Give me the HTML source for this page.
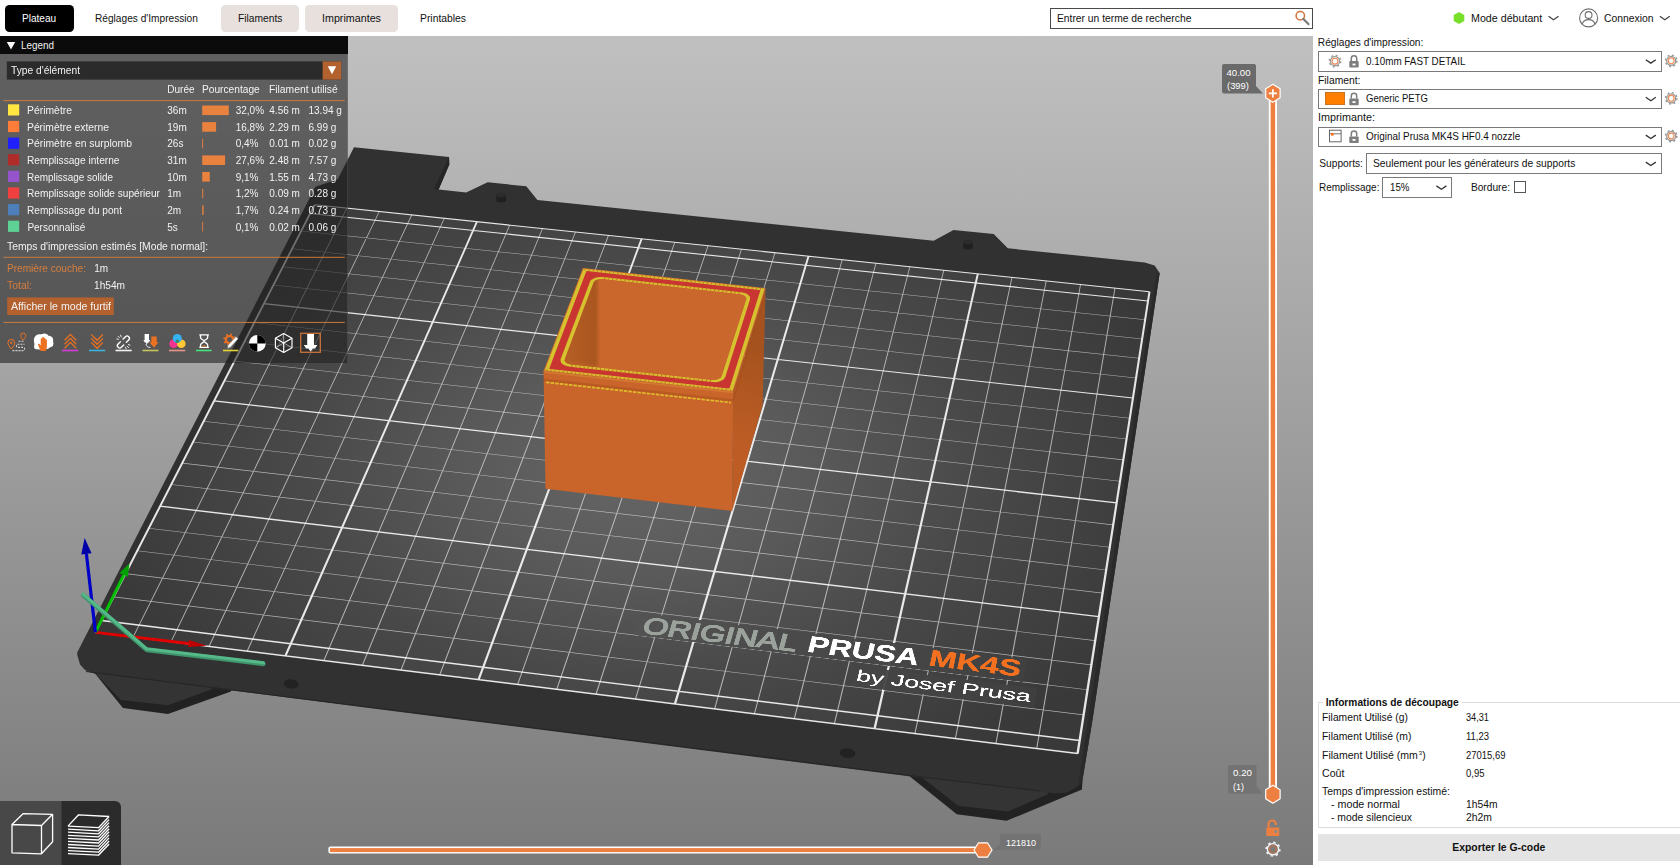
<!DOCTYPE html>
<html lang="fr"><head><meta charset="utf-8"><title>PrusaSlicer</title>
<style>
html,body{margin:0;padding:0;}
body{width:1680px;height:865px;overflow:hidden;background:#fff;font-family:"Liberation Sans", sans-serif;position:relative;}
.t{position:absolute;white-space:nowrap;transform-origin:0 0;}
.abs{position:absolute;}
#scene{position:absolute;left:0;top:0;}
.combo{position:absolute;box-sizing:border-box;border:1px solid #7a7a7a;background:#fff;}
.lg{position:absolute;}
</style></head><body>

<svg id="scene" width="1680" height="865" viewBox="0 0 1680 865">
<defs>
<linearGradient id="bg" x1="0" y1="0" x2="0" y2="1"><stop offset="0" stop-color="#c0c0c0"/><stop offset="1" stop-color="#7a7a7a"/></linearGradient>
<radialGradient id="bedg" gradientUnits="userSpaceOnUse" cx="640" cy="470" r="560" gradientTransform="translate(640 470) scale(1 0.62) translate(-640 -470)"><stop offset="0" stop-color="#666666"/><stop offset="0.3" stop-color="#5a5a5a"/><stop offset="0.6" stop-color="#494949"/><stop offset="1" stop-color="#393939"/></radialGradient>
<linearGradient id="boxr" gradientUnits="userSpaceOnUse" x1="733" y1="440" x2="765" y2="350"><stop offset="0" stop-color="#bd5d25"/><stop offset="1" stop-color="#a6521e"/></linearGradient>
<linearGradient id="cavl" gradientUnits="userSpaceOnUse" x1="562" y1="0" x2="600.5" y2="0"><stop offset="0" stop-color="#b75e25"/><stop offset="0.86" stop-color="#aa561f"/><stop offset="1" stop-color="#c9672d"/></linearGradient>
<linearGradient id="cavf" gradientUnits="userSpaceOnUse" x1="640" y1="380" x2="641.5" y2="371"><stop offset="0" stop-color="#bb5e25"/><stop offset="1" stop-color="#c9672d" stop-opacity="0"/></linearGradient>
</defs>
<rect x="0" y="36" width="1313" height="829" fill="url(#bg)"/>
<polygon points="86.0,670.0 95.4,673.9 122.9,707.9 168.0,713.9 230.9,691.6 236.0,680.0" fill="#222222"/>
<polygon points="95.4,673.5 120.9,700.1 168.0,705.3 212.6,688.9 200.0,680.0" fill="#343434"/>
<polygon points="908.0,775.0 956.8,814.2 1006.6,820.8 1081.9,789.4 1082.5,780.8 1060.0,780.0" fill="#222222"/>
<polygon points="922.7,778.0 958.1,805.7 1007.9,811.5 1048.5,793.9 1040.0,780.0" fill="#343434"/>
<polygon points="354.0,147.3 449.0,157.0 449.3,164.6 438.6,189.6 466.2,192.6 487.6,182.3 526.3,186.3 537.4,199.9 933.7,240.7 953.5,230.0 993.7,234.1 1007.8,248.3 1144.7,262.4 1154.6,265.6 1159.7,273.0 1107.5,620.1 1092.5,720.0 1082.3,781.0 1079.5,784.5 1074.0,789.0 1066.0,792.7 1056.0,793.6 1040.0,791.6 912.7,776.7 420.0,714.5 92.0,672.7 85.0,670.0 80.0,664.5 77.3,655.0 77.2,652.5 315.4,186.8 337.7,179.3" fill="#313131"/>
<polygon points="449.0,157.0 449.3,164.6 438.6,189.6 433.9,189.2" fill="#262626"/>
<polygon points="1159.7,273.0 1107.5,620.1 1092.5,720.0 1082.3,781.0 1078.5,783.0 1079.7,775.3 1103.6,619.6 1156.5,273.7" fill="#2a2a2a"/>
<polyline points="86.0,671.5 420.0,713.5 912.7,775.8 1040.0,791.0" fill="none" stroke="#262626" stroke-width="1"/>
<polygon points="95.4,632.4 1077.6,753.6 1149.5,291.7 314.6,204.8" fill="url(#bedg)"/>
<path d="M132.65 637.00L133.67 637.12L347.33 208.21L346.46 208.12Z M170.53 641.67L171.56 641.80L379.72 211.58L378.84 211.49Z M208.54 646.36L209.57 646.49L412.19 214.96L411.32 214.87Z M246.67 651.07L247.70 651.19L444.76 218.35L443.88 218.26Z M323.30 660.52L324.34 660.65L510.16 225.15L509.27 225.06Z M361.80 665.27L362.84 665.40L543.00 228.57L542.11 228.48Z M400.43 670.04L401.48 670.17L575.92 232.00L575.03 231.91Z M439.19 674.82L440.24 674.95L608.94 235.44L608.05 235.34Z M517.08 684.43L518.14 684.56L675.25 242.34L674.35 242.24Z M556.22 689.26L557.28 689.39L708.55 245.80L707.65 245.71Z M595.49 694.11L596.56 694.24L741.93 249.28L741.03 249.18Z M634.89 698.97L635.96 699.10L775.41 252.76L774.51 252.67Z M714.08 708.74L715.16 708.88L842.66 259.76L841.74 259.67Z M753.88 713.65L754.95 713.79L876.42 263.28L875.50 263.18Z M793.80 718.58L794.88 718.71L910.28 266.80L909.36 266.71Z M833.86 723.52L834.94 723.66L944.23 270.33L943.31 270.24Z M914.38 733.46L915.47 733.59L1012.42 277.43L1011.50 277.34Z M954.84 738.45L955.94 738.59L1046.66 281.00L1045.74 280.90Z M995.44 743.46L996.54 743.60L1081.00 284.57L1080.07 284.47Z M1036.18 748.49L1037.28 748.62L1115.43 288.15L1114.50 288.06Z M113.48 597.14L1083.56 715.28L1083.67 714.60L113.80 596.50Z M125.38 573.91L1087.49 690.07L1087.59 689.39L125.70 573.29Z M137.09 551.07L1091.35 665.29L1091.45 664.62L137.41 550.45Z M148.61 528.60L1095.14 640.93L1095.24 640.28L148.92 528.00Z M171.08 484.76L1102.53 593.45L1102.63 592.82L171.38 484.18Z M182.05 463.38L1106.13 570.31L1106.23 569.69L182.34 462.80Z M192.84 442.33L1109.67 547.55L1109.77 546.94L193.12 441.77Z M203.45 421.62L1113.16 525.17L1113.25 524.57L203.74 421.06Z M224.19 381.16L1119.96 481.49L1120.05 480.91L224.47 380.62Z M234.32 361.40L1123.27 460.18L1123.36 459.60L234.59 360.87Z M244.30 341.94L1126.54 439.20L1126.63 438.64L244.56 341.42Z M254.12 322.78L1129.75 418.56L1129.84 418.01L254.38 322.27Z M273.32 285.33L1136.03 378.24L1136.11 377.70L273.57 284.83Z M282.70 267.02L1139.09 358.54L1139.18 358.02L282.96 266.53Z M291.95 248.98L1142.11 339.15L1142.19 338.63L292.20 248.50Z M301.06 231.21L1145.09 320.06L1145.17 319.54L301.31 230.73Z" fill="#ffffff" fill-opacity="0.6"/>
<path d="M94.31 632.27L96.49 632.53L315.54 204.90L313.66 204.70Z M284.33 655.71L286.55 655.99L477.92 221.80L476.03 221.60Z M477.47 679.55L479.73 679.82L642.56 238.94L640.64 238.74Z M673.81 703.77L676.11 704.06L809.51 256.31L807.56 256.11Z M873.43 728.41L875.76 728.69L978.80 273.93L976.83 273.73Z M1076.41 753.45L1078.79 753.75L1150.50 291.80L1148.50 291.60Z M95.04 633.10L1077.48 754.36L1077.72 752.84L95.76 631.70Z M101.18 621.13L1079.51 741.35L1079.74 739.85L101.89 619.75Z M159.76 506.84L1098.81 617.36L1099.02 615.98L160.42 505.57Z M213.74 401.54L1116.53 503.49L1116.73 502.22L214.35 400.37Z M263.64 304.21L1132.87 398.55L1133.05 397.38L264.20 303.12Z M309.90 213.96L1147.97 301.54L1148.14 300.46L310.42 212.96Z M314.34 205.30L1149.42 292.24L1149.58 291.16L314.86 204.30Z" fill="#ffffff" fill-opacity="0.88"/>
<ellipse cx="291.2" cy="683.9" rx="7.6" ry="4.6" fill="#222" transform="rotate(7 291.2 683.9)"/>
<ellipse cx="847.5" cy="753.2" rx="7.8" ry="4.7" fill="#222" transform="rotate(7 847.5 753.2)"/>
<path d="M496.3 195.0v5.2a4.9 2.2 0 0 0 9.8 0v-5.2z" fill="#202020"/>
<ellipse cx="501.2" cy="195.0" rx="4.9" ry="2.2" fill="#2b2b2b"/>
<path d="M963.1 242.0v5.2a4.9 2.2 0 0 0 9.8 0v-5.2z" fill="#202020"/>
<ellipse cx="968.0" cy="242.0" rx="4.9" ry="2.2" fill="#2b2b2b"/>
<!--BEDTEXT-->
<line x1="95.4" y1="632.4" x2="188.4" y2="643.5" stroke="#e00000" stroke-width="2.9"/><polygon points="206.8,645.7 188.0,646.9 188.8,640.1" fill="#c00000"/>
<line x1="95.4" y1="632.4" x2="123.7" y2="575.1" stroke="#00c000" stroke-width="3.0"/><polygon points="129.4,563.4 127.8,577.1 119.5,573.0" fill="#00a000"/>
<line x1="95.4" y1="632.4" x2="86.4" y2="553.9" stroke="#0000c8" stroke-width="3.2"/><polygon points="84.6,538.0 91.6,553.3 81.3,554.5" fill="#0000a8"/>
<polyline points="83.4,595.2 146.9,650.0 263.3,663.9" fill="none" stroke="#3f946c" stroke-width="4.6" stroke-linejoin="round" stroke-linecap="round"/>
<polyline points="83.1,594.2 146.7,648.8 263.5,662.7" fill="none" stroke="#56b98a" stroke-width="3.0" stroke-linejoin="round" stroke-linecap="round"/>
<polygon points="545.5,488.7 732.2,510.9 733.2,391.5 543.6,370.9" fill="#c9652b"/>
<polygon points="732.2,510.9 762.6,405.1 765.6,288.3 733.2,391.5" fill="url(#boxr)"/>
<polygon points="543.6,370.9 733.2,391.5 765.6,288.3 582.9,268.1" fill="#d5702c"/>
<polygon points="731.7,390.8 731.9,390.8 732.1,390.8 732.2,390.7 732.4,390.6 732.5,390.5 732.6,390.4 764.4,289.1 764.4,289.0 764.4,288.9 764.3,288.8 764.2,288.7 764.0,288.7 763.8,288.6 584.4,268.8 584.2,268.8 584.0,268.8 583.8,268.8 583.6,268.9 583.5,269.0 583.5,269.1 544.9,370.0 544.9,370.2 544.9,370.3 545.0,370.4 545.2,370.5 545.3,370.5 545.5,370.6" fill="#d6c22e"/>
<polygon points="728.7,388.4 728.9,388.4 729.1,388.3 729.3,388.3 729.4,388.2 729.5,388.1 729.6,388.0 760.3,290.6 760.4,290.5 760.3,290.4 760.2,290.3 760.1,290.2 759.9,290.2 759.7,290.1 587.1,271.0 586.9,271.0 586.7,271.1 586.6,271.1 586.4,271.2 586.3,271.3 586.2,271.4 549.3,368.4 549.3,368.5 549.3,368.6 549.4,368.7 549.5,368.8 549.7,368.9 549.9,368.9" fill="#c93531"/>
<polygon points="712.0,382.1 715.0,382.2 717.9,381.9 720.6,381.1 722.8,380.0 724.4,378.6 725.3,377.0 750.0,299.4 750.1,297.8 749.5,296.2 748.1,294.8 746.2,293.6 743.7,292.7 741.0,292.2 603.2,277.0 600.3,276.9 597.4,277.2 594.8,277.9 592.6,278.9 590.9,280.2 590.0,281.7 560.7,359.1 560.5,360.7 561.1,362.4 562.4,363.9 564.4,365.2 566.9,366.1 569.7,366.7" fill="#d6c22e"/>
<clipPath id="cavc"><polygon points="711.7,379.9 714.0,380.0 716.2,379.7 718.2,379.1 719.8,378.3 721.0,377.2 721.7,376.0 746.2,299.5 746.3,298.3 745.8,297.1 744.8,296.0 743.3,295.1 741.5,294.5 739.4,294.1 603.4,279.1 601.2,279.0 599.1,279.2 597.1,279.7 595.4,280.5 594.2,281.5 593.5,282.7 564.7,358.9 564.6,360.2 565.0,361.4 566.0,362.6 567.4,363.5 569.3,364.2 571.5,364.6"/></clipPath>
<g clip-path="url(#cavc)">
<polygon points="711.7,379.9 714.0,380.0 716.2,379.7 718.2,379.1 719.8,378.3 721.0,377.2 721.7,376.0 746.2,299.5 746.3,298.3 745.8,297.1 744.8,296.0 743.3,295.1 741.5,294.5 739.4,294.1 603.4,279.1 601.2,279.0 599.1,279.2 597.1,279.7 595.4,280.5 594.2,281.5 593.5,282.7 564.7,358.9 564.6,360.2 565.0,361.4 566.0,362.6 567.4,363.5 569.3,364.2 571.5,364.6" fill="#c8662c"/>
<polygon points="598.8,278.6 747.6,295.0 745.0,411.9 600.3,395.8" fill="#c9672d"/>
<polygon points="594.4,277.8 598.8,276.2 600.3,395.8 564.4,481.4 562.9,363.7" fill="url(#cavl)"/>
<polygon points="562.9,363.7 720.2,380.8 722.6,373.4 566.5,354.2" fill="url(#cavf)"/>
</g>
<polygon points="543.7,378.6 733.1,399.3 733.1,401.6 543.8,380.9" fill="#b85a22"/>
<polygon points="543.6,370.9 733.2,391.5 733.2,393.3 543.6,372.7" fill="#d4792f"/>
<line x1="546.1" y1="382.3" x2="730.8" y2="402.6" stroke="#e0bd2c" stroke-width="1.7" stroke-dasharray="3.4 1.2"/>
<polygon points="733.1,399.3 765.4,295.9 765.3,298.2 733.1,401.6" fill="#a54d1c"/>
<line x1="546.4" y1="370.2" x2="731.3" y2="390.3" stroke="#c9762a" stroke-width="2" stroke-dasharray="1.2 2.9" />
<line x1="584.6" y1="269.2" x2="763.0" y2="289.0" stroke="#c9762a" stroke-width="2" stroke-dasharray="1.2 2.9" />
<line x1="571.3" y1="365.9" x2="711.2" y2="381.1" stroke="#c9762a" stroke-width="2" stroke-dasharray="1.2 2.9" />
<line x1="604.0" y1="277.9" x2="739.5" y2="292.9" stroke="#c9762a" stroke-width="2" stroke-dasharray="1.2 2.9" />
<line x1="1272.9" y1="93" x2="1272.9" y2="794" stroke="#fff" stroke-width="8.2"/>
<line x1="1272.9" y1="93" x2="1272.9" y2="794" stroke="#ed7f41" stroke-width="4.5"/>
<polygon points="1272.9,84.3 1280.1,88.8 1280.1,97.8 1272.9,102.3 1265.7,97.8 1265.7,88.8" fill="#ed7f41" stroke="#fff" stroke-width="1.2" stroke-linejoin="round"/>
<path d="M1268.8 93.3h8.2M1272.9 89.2v8.2" stroke="#fff" stroke-width="1.7"/>
<polygon points="1272.9,785.3 1280.1,789.8 1280.1,798.8 1272.9,803.3 1265.7,798.8 1265.7,789.8" fill="#ed7f41" stroke="#fff" stroke-width="1.2" stroke-linejoin="round"/>
<path d="M1224 64h30a2 2 0 0 1 2 2v20l7 7.5h-39a2 2 0 0 1-2-2v-25.500a2 2 0 0 1 2-2z" fill="#6a6a6a"/>
<path d="M1230 765h24.500a2 2 0 0 1 2 2v19l6 7.700h-32.500a2 2 0 0 1-2-2v-24.700a2 2 0 0 1 2-2z" fill="#737373"/>
<rect x="328.4" y="846.6" width="655" height="7" rx="2" fill="#fff"/>
<rect x="330" y="848.1" width="653" height="4" fill="#ed7f41"/>
<polygon points="992.0,850.0 987.5,857.2 978.5,857.2 974.0,850.0 978.5,842.8 987.5,842.8" fill="#ed7f41" stroke="#fff" stroke-width="1.2" stroke-linejoin="round"/>
<path d="M1002 833.700h37a2 2 0 0 1 2 2v12.300a2 2 0 0 1-2 2h-46l7-6v-8.300a2 2 0 0 1 2-2z" fill="#737373"/>
<g fill="none" stroke="#ed7f41"><path d="M1268.6 827.5v-3.4a3.6 3.6 0 0 1 7.2 0v1" stroke-width="2.2"/></g><rect x="1266.3" y="827.5" width="13" height="8.4" rx="1" fill="#ed7f41"/><rect x="1274.3" y="830.2" width="3.2" height="2.6" fill="#8a8a8a"/>
<g transform="translate(1273 849.2)"><circle r="5.6" fill="none" stroke="#f4f4f4" stroke-width="1.4"/><circle r="6.9" fill="none" stroke="#f4f4f4" stroke-width="1.5" stroke-dasharray="2.4 3.02"/><circle r="3.5" fill="none" stroke="#c9703f" stroke-width="1.1"/></g>
<path d="M0 801h115a6 6 0 0 1 6 6v58h-121z" fill="#2b2b2b"/><rect x="0" y="801" width="61.5" height="64" fill="#484848"/>
<g fill="none" stroke="#fff" stroke-width="1.3" stroke-linejoin="round"><path d="M12 824.5l29.5 1v28.3l-29.5-1zM12 824.5l11-10.8 29.6 0.6-11.1 11.2M52.6 814.3v27.5l-11.1 12"/></g>
<g fill="none" stroke="#fff" stroke-width="1.35" stroke-linejoin="round"><path d="M68 853.6l30.5 1.6 10.6-11.2" /><path d="M68 850.6l30.5 1.6 10.6-11.2" /><path d="M68 847.5l30.5 1.6 10.6-11.2" /><path d="M68 844.5l30.5 1.6 10.6-11.2" /><path d="M68 841.4l30.5 1.6 10.6-11.2" /><path d="M68 838.4l30.5 1.6 10.6-11.2" /><path d="M68 835.3l30.5 1.6 10.6-11.2" /><path d="M68 832.2l30.5 1.6 10.6-11.2" /><path d="M68 829.2l30.5 1.6 10.6-11.2" /><path d="M68 826.1l30.5 1.6 10.6-11.2" /><path d="M68 826.1l10.6-11.3 30.5 1.7"/></g>
</svg>
<span class="t" style="left:1226.5px;top:66.77px;font-size:9.6px;line-height:11.6px;color:#fff;">40.00</span>
<span class="t" style="left:1226.5px;top:79.97px;font-size:9.6px;line-height:11.6px;color:#fff;transform:scaleX(0.9817);">(399)</span>
<span class="t" style="left:1232.5px;top:766.97px;font-size:9.6px;line-height:11.6px;color:#fff;transform:scaleX(1.0169);">0.20</span>
<span class="t" style="left:1232.5px;top:780.67px;font-size:9.6px;line-height:11.6px;color:#fff;transform:scaleX(0.9377);">(1)</span>
<span class="t" style="left:1005.6px;top:836.77px;font-size:9.6px;line-height:11.6px;color:#fff;transform:scaleX(0.9365);">121810</span>
<div class="abs" style="left:0;top:0;width:2500px;height:2100px;transform-origin:0 0;transform:matrix3d(0.3182121343,0.03076378625,0,-1.369975057e-05,-0.1113077487,0.1577018175,0,-7.260790408e-05,0,0,1,0,314.6000061,204.8000031,0,1);pointer-events:none;"><div class="abs" style="left:1348px;top:1758px;width:990px;height:92px;background:linear-gradient(to right,#525252,#484848 50%,#404040);opacity:0.95"></div><div class="abs" style="left:1916px;top:1868px;width:460px;height:78px;background:linear-gradient(to right,#454545,#3f3f3f);opacity:0.95"></div><span class="t" style="left:1363.0px;top:1751.0px;font-size:91.9px;line-height:110.3px;color:#9ba29c;-webkit-text-stroke:5.2px #9ba29c;transform:scaleX(0.9016);">ORIGINAL</span><span class="t" style="left:1787.0px;top:1747.0px;font-size:91.9px;line-height:110.3px;color:#ffffff;font-weight:bold;-webkit-text-stroke:1.6px #ffffff;transform:scaleX(0.8797);">PRUSA</span><span class="t" style="left:2096.0px;top:1743.0px;font-size:91.9px;line-height:110.3px;color:#f2701f;font-weight:bold;-webkit-text-stroke:1.6px #f2701f;transform:scaleX(0.9086);">MK4S</span><span class="t" style="left:1926.0px;top:1866.3px;font-size:63.1px;line-height:75.7px;color:#ffffff;-webkit-text-stroke:0.8px #ffffff;transform:scaleX(1.0495);">by Josef Prusa</span></div>
<div class="abs" style="left:0;top:54px;width:347.5px;height:309px;background:rgba(33,33,33,0.6);box-shadow:inset -1px 0 0 rgba(255,255,255,0.10);"></div>
<div class="abs" style="left:0;top:36px;width:347.5px;height:18px;background:#0b0b0b;"></div>
<svg class="abs" style="left:0;top:36px" width="348" height="330" viewBox="0 36 348 330">
<path d="M6.8 41.9h8.4l-4.2 7.6z" fill="#fff"/>
<rect x="6.8" y="61.4" width="334.4" height="18.2" fill="#2b2b2b"/><rect x="322.6" y="61.4" width="18.6" height="18.2" fill="#b3612e"/><path d="M327.8 66.3h8.4l-4.2 8z" fill="#fff"/>
<rect x="3.4" y="100.1" width="341.4" height="1" fill="#c97a3e"/>
<rect x="3.4" y="256.8" width="341.4" height="1" fill="#c97a3e"/>
<rect x="3.4" y="321.9" width="341.4" height="1" fill="#c97a3e"/>
<rect x="8" y="104.3" width="11.2" height="11.2" fill="#ffe640"/>
<rect x="202.2" y="105.5" width="26.6" height="9.6" fill="#e9813f"/>
<rect x="8" y="120.9" width="11.2" height="11.2" fill="#ff7d38"/>
<rect x="202.2" y="122.1" width="13.9" height="9.6" fill="#e9813f"/>
<rect x="8" y="137.6" width="11.2" height="11.2" fill="#1f1fff"/>
<rect x="202.2" y="138.8" width="0.9" height="9.6" fill="#e9813f"/>
<rect x="8" y="154.2" width="11.2" height="11.2" fill="#b02c28"/>
<rect x="202.2" y="155.4" width="22.9" height="9.6" fill="#e9813f"/>
<rect x="8" y="170.8" width="11.2" height="11.2" fill="#9654cc"/>
<rect x="202.2" y="172.0" width="7.6" height="9.6" fill="#e9813f"/>
<rect x="8" y="187.4" width="11.2" height="11.2" fill="#f04040"/>
<rect x="202.2" y="188.6" width="1.0" height="9.6" fill="#e9813f"/>
<rect x="8" y="204.1" width="11.2" height="11.2" fill="#4d80ba"/>
<rect x="202.2" y="205.3" width="1.4" height="9.6" fill="#e9813f"/>
<rect x="8" y="220.7" width="11.2" height="11.2" fill="#5ed194"/>
<rect x="202.2" y="221.9" width="0.9" height="9.6" fill="#e9813f"/>
<rect x="7.2" y="297.4" width="106.6" height="17.6" fill="#b3612e"/>
<g fill="none" stroke="#ec7222" stroke-width="1"><path d="M11.3 349c-2.6-3.2-3.4-4.6-3.4-6.3a3.4 3.4 0 0 1 6.8 0c0 1.7-0.8 3.1-3.4 6.3z"/><circle cx="11.3" cy="342.7" r="0.9"/><path d="M23.2 340.2c-1.9-2.4-2.5-3.4-2.5-4.6a2.5 2.5 0 0 1 5 0c0 1.2-0.6 2.2-2.5 4.6z"/></g><g fill="none" stroke="#cfcfcf" stroke-width="1.1" stroke-dasharray="2 1"><path d="M12.5 350.6h10.5a1.6 1.6 0 0 0 0-3.2h-5a1.6 1.6 0 0 1 0-3.2h6.5"/><path d="M18.5 341.2h6"/></g><path d="M35.5 336c2-2.6 5-1.4 6.6-2 2.6-1.2 5.6-0.2 6.2 1.8 2.8 0 5 1.6 4.8 4.2-0.2 2 0.8 3.2 0 5.2-0.8 2.2-3.2 1.6-4.6 3.4-1.6 1.2-11 1.4-13.2 0.4-2-1.4-0.6-3.6-1-5.6-0.4-2.6-1-5.2 1.2-7.400z" fill="#fff"/><path d="M40.6 351l-2.400-5.800c-0.500-1.200 0.900-1.900 1.600-0.900l0.900 1.300v-6.600c0-1.100 1.500-1.100 1.500 0v-1.400c0-1.100 1.600-1.100 1.600 0v1c0-1.100 1.600-1.100 1.600 0v1.300c0-1 1.500-1 1.500 0v6.300c0 2-0.600 3.200-1.200 4.800z" fill="#ec7222"/><g fill="none" stroke="#ec7222" stroke-width="1.3"><path d="M64.600 340.300l5.800-5.900 5.800 5.900M64.600 344.300l5.800-5.900 5.800 5.900M64.600 348.300l5.800-5.900 5.800 5.900"/></g><rect x="62" y="349.700" width="16.200" height="1.600" fill="#d63bd6"/><g fill="none" stroke="#ec7222" stroke-width="1.3"><path d="M91.300 334.400l5.800 5.900 5.800-5.900M91.300 338.400l5.800 5.900 5.800-5.900M91.300 342.400l5.800 5.900 5.800-5.900"/></g><rect x="89" y="349.700" width="16.200" height="1.600" fill="#3bb2d9"/><g transform="rotate(-45 123.4 342)" fill="none" stroke="#fff" stroke-width="1.35" stroke-linecap="round"><path d="M121.600 339.700h-3.400a2.300 2.300 0 0 0 0 4.600h3.400M125.200 339.700h3.400a2.300 2.300 0 0 1 0 4.600h-3.400"/></g><g stroke="#fff" stroke-width="0.9" stroke-linecap="round"><path d="M118.200 336.400l1.200 1.200M120.700 335.200l0.400 1.600M116.800 338.900l1.600 0.400M128.600 347.600l-1.200-1.200M126.100 348.800l-0.400-1.600M130 345.100l-1.600-0.400"/></g><rect x="115.500" y="349.700" width="16.200" height="1.600" fill="#f2f2f2"/><path d="M144.600 334h4.400v6h1.200l-1.400 2.600h-1l-1 1.800-1-1.800h-1l-1.400-2.600h1.200z" fill="#fff"/><path d="M146 344c0.400 2.400 1.600 3.400 4.400 3.400" fill="none" stroke="#fff" stroke-width="0.900"/><path d="M151.300 336.600h5.400v5.600h1.800l-4.500 5.600-4.500-5.600h1.800z" fill="#ec7222"/><rect x="142.500" y="349.700" width="16" height="1.600" fill="#c6c45a"/><circle cx="173.600" cy="343.700" r="4.300" fill="#f2338f"/><circle cx="181.300" cy="343.700" r="4.300" fill="#ffc933"/><circle cx="177.300" cy="338.400" r="4.500" fill="#35b3f2"/><circle cx="177.400" cy="341.300" r="1.800" fill="#2f8f6a"/><rect x="169" y="349.700" width="16.200" height="1.600" fill="#e8948a"/><g fill="none" stroke="#fff" stroke-width="1.300"><path d="M199.300 334.800h9.600M199.300 347.400h9.600M200.500 335v2.400c0 2 3.600 2.600 3.600 3.800s-3.600 1.800-3.600 3.800v2.400M207.700 335v2.400c0 2-3.600 2.600-3.600 3.800s3.600 1.800 3.600 3.800v2.400"/></g><path d="M201.600 346.600c0.600-1.600 4.400-1.600 5 0z" fill="#ec7222"/><rect x="196" y="349.700" width="15.600" height="1.600" fill="#45e078"/><g transform="translate(229.500 339.600)"><circle r="3.600" fill="none" stroke="#ec7222" stroke-width="2.200"/><circle r="5.300" fill="none" stroke="#ec7222" stroke-width="1.800" stroke-dasharray="1.900 2.260"/></g><path d="M228 345.200l8-8.600 2.300 2.200-8 8.600-3 1z" fill="#fff" stroke="#5a5a5a" stroke-width="0.500"/><rect x="223" y="349.700" width="15.400" height="1.600" fill="#e2d233"/><circle cx="257.300" cy="343.400" r="8.400" fill="#fff"/><path d="M257.300 343.400v-8.400a8.400 8.400 0 0 1 8.400 8.400zM257.300 343.400v8.400a8.400 8.400 0 0 1-8.400-8.400z" fill="#000"/><g fill="none" stroke="#fff" stroke-width="1.150" stroke-linejoin="round"><path d="M283.700 333.600l8.300 4.700v9.500l-8.300 4.700-8.300-4.700v-9.500z"/><path d="M275.400 338.300l8.300 4.700 8.300-4.700M283.700 343v9.500" /><path d="M283.700 333.600v9.400M275.400 347.800l8.300-4.800 8.300 4.800" stroke-width="0.700" stroke-opacity="0.800"/></g><rect x="300.700" y="333.300" width="19.600" height="19" fill="none" stroke="#c8733a" stroke-width="1.300"/><path d="M307.200 333.900h6.800v11h3.400l-2.300 3.500h-2.300l-2.200 3-2.200-3h-2.300l-2.300-3.500h3.400z" fill="#fff"/>
</svg>
<span class="t" style="left:21.2px;top:40.23px;font-size:10px;line-height:12px;color:#f2f2f2;transform:scaleX(0.9889);">Legend</span>
<span class="t" style="left:10.7px;top:65.03px;font-size:10px;line-height:12px;color:#f2f2f2;transform:scaleX(1.0221);">Type d'élément</span>
<span class="t" style="left:167.3px;top:84.44px;font-size:10px;line-height:12px;color:#f2f2f2;">Durée</span>
<span class="t" style="left:202.2px;top:84.44px;font-size:10px;line-height:12px;color:#f2f2f2;transform:scaleX(1.0175);">Pourcentage</span>
<span class="t" style="left:269.3px;top:84.44px;font-size:10px;line-height:12px;color:#f2f2f2;transform:scaleX(1.0301);">Filament utilisé</span>
<span class="t" style="left:27.4px;top:105.23px;font-size:10px;line-height:12px;color:#f2f2f2;transform:scaleX(1.0382);">Périmètre</span>
<span class="t" style="left:167.3px;top:105.23px;font-size:10px;line-height:12px;color:#f2f2f2;">36m</span>
<span class="t" style="left:235.7px;top:105.23px;font-size:10px;line-height:12px;color:#f2f2f2;">32,0%</span>
<span class="t" style="left:269.3px;top:105.23px;font-size:10px;line-height:12px;color:#f2f2f2;">4.56 m</span>
<span class="t" style="left:308.5px;top:105.23px;font-size:10px;line-height:12px;color:#f2f2f2;">13.94 g</span>
<span class="t" style="left:27.4px;top:121.86px;font-size:10px;line-height:12px;color:#f2f2f2;transform:scaleX(1.0317);">Périmètre externe</span>
<span class="t" style="left:167.3px;top:121.86px;font-size:10px;line-height:12px;color:#f2f2f2;">19m</span>
<span class="t" style="left:235.7px;top:121.86px;font-size:10px;line-height:12px;color:#f2f2f2;">16,8%</span>
<span class="t" style="left:269.3px;top:121.86px;font-size:10px;line-height:12px;color:#f2f2f2;">2.29 m</span>
<span class="t" style="left:308.5px;top:121.86px;font-size:10px;line-height:12px;color:#f2f2f2;">6.99 g</span>
<span class="t" style="left:27.4px;top:138.49px;font-size:10px;line-height:12px;color:#f2f2f2;transform:scaleX(1.0380);">Périmètre en surplomb</span>
<span class="t" style="left:167.3px;top:138.49px;font-size:10px;line-height:12px;color:#f2f2f2;">26s</span>
<span class="t" style="left:235.7px;top:138.49px;font-size:10px;line-height:12px;color:#f2f2f2;">0,4%</span>
<span class="t" style="left:269.3px;top:138.49px;font-size:10px;line-height:12px;color:#f2f2f2;">0.01 m</span>
<span class="t" style="left:308.5px;top:138.49px;font-size:10px;line-height:12px;color:#f2f2f2;">0.02 g</span>
<span class="t" style="left:27.4px;top:155.12px;font-size:10px;line-height:12px;color:#f2f2f2;transform:scaleX(1.0147);">Remplissage interne</span>
<span class="t" style="left:167.3px;top:155.12px;font-size:10px;line-height:12px;color:#f2f2f2;">31m</span>
<span class="t" style="left:235.7px;top:155.12px;font-size:10px;line-height:12px;color:#f2f2f2;">27,6%</span>
<span class="t" style="left:269.3px;top:155.12px;font-size:10px;line-height:12px;color:#f2f2f2;">2.48 m</span>
<span class="t" style="left:308.5px;top:155.12px;font-size:10px;line-height:12px;color:#f2f2f2;">7.57 g</span>
<span class="t" style="left:27.4px;top:171.75px;font-size:10px;line-height:12px;color:#f2f2f2;transform:scaleX(0.9918);">Remplissage solide</span>
<span class="t" style="left:167.3px;top:171.75px;font-size:10px;line-height:12px;color:#f2f2f2;">10m</span>
<span class="t" style="left:235.7px;top:171.75px;font-size:10px;line-height:12px;color:#f2f2f2;">9,1%</span>
<span class="t" style="left:269.3px;top:171.75px;font-size:10px;line-height:12px;color:#f2f2f2;">1.55 m</span>
<span class="t" style="left:308.5px;top:171.75px;font-size:10px;line-height:12px;color:#f2f2f2;">4.73 g</span>
<span class="t" style="left:27.4px;top:188.38px;font-size:10px;line-height:12px;color:#f2f2f2;transform:scaleX(1.0139);">Remplissage solide supérieur</span>
<span class="t" style="left:167.3px;top:188.38px;font-size:10px;line-height:12px;color:#f2f2f2;">1m</span>
<span class="t" style="left:235.7px;top:188.38px;font-size:10px;line-height:12px;color:#f2f2f2;">1,2%</span>
<span class="t" style="left:269.3px;top:188.38px;font-size:10px;line-height:12px;color:#f2f2f2;">0.09 m</span>
<span class="t" style="left:308.5px;top:188.38px;font-size:10px;line-height:12px;color:#f2f2f2;">0.28 g</span>
<span class="t" style="left:27.4px;top:205.01px;font-size:10px;line-height:12px;color:#f2f2f2;transform:scaleX(1.0112);">Remplissage du pont</span>
<span class="t" style="left:167.3px;top:205.01px;font-size:10px;line-height:12px;color:#f2f2f2;">2m</span>
<span class="t" style="left:235.7px;top:205.01px;font-size:10px;line-height:12px;color:#f2f2f2;">1,7%</span>
<span class="t" style="left:269.3px;top:205.01px;font-size:10px;line-height:12px;color:#f2f2f2;">0.24 m</span>
<span class="t" style="left:308.5px;top:205.01px;font-size:10px;line-height:12px;color:#f2f2f2;">0.73 g</span>
<span class="t" style="left:27.4px;top:221.64px;font-size:10px;line-height:12px;color:#f2f2f2;">Personnalisé</span>
<span class="t" style="left:167.3px;top:221.64px;font-size:10px;line-height:12px;color:#f2f2f2;">5s</span>
<span class="t" style="left:235.7px;top:221.64px;font-size:10px;line-height:12px;color:#f2f2f2;">0,1%</span>
<span class="t" style="left:269.3px;top:221.64px;font-size:10px;line-height:12px;color:#f2f2f2;">0.02 m</span>
<span class="t" style="left:308.5px;top:221.64px;font-size:10px;line-height:12px;color:#f2f2f2;">0.06 g</span>
<span class="t" style="left:7.4px;top:241.43px;font-size:10px;line-height:12px;color:#f2f2f2;transform:scaleX(1.0321);">Temps d'impression estimés [Mode normal]:</span>
<span class="t" style="left:7.4px;top:262.84px;font-size:10px;line-height:12px;color:#d97e3d;transform:scaleX(1.0080);">Première couche:</span>
<span class="t" style="left:94.2px;top:262.84px;font-size:10px;line-height:12px;color:#f2f2f2;">1m</span>
<span class="t" style="left:7.4px;top:279.63px;font-size:10px;line-height:12px;color:#d97e3d;transform:scaleX(1.0460);">Total:</span>
<span class="t" style="left:94.2px;top:279.63px;font-size:10px;line-height:12px;color:#f2f2f2;transform:scaleX(1.0139);">1h54m</span>
<span class="t" style="left:10.7px;top:301.04px;font-size:10px;line-height:12px;color:#f2f2f2;transform:scaleX(1.0604);">Afficher le mode furtif</span>
<div class="abs" style="left:0;top:0;width:1680px;height:36px;background:#fff;"></div>
<div class="abs" style="left:4.5px;top:5px;width:69px;height:26.5px;border-radius:4.5px;background:#000;"></div>
<div class="abs" style="left:221px;top:5px;width:78px;height:26.5px;border-radius:4.5px;background:#e7e0dd;"></div>
<div class="abs" style="left:304.5px;top:5px;width:93px;height:26.5px;border-radius:4.5px;background:#e7e0dd;"></div>
<span class="t" style="left:22.0px;top:12.50px;font-size:10.4px;line-height:12.4px;color:#fff;transform:scaleX(0.9697);">Plateau</span>
<span class="t" style="left:95.3px;top:12.50px;font-size:10.4px;line-height:12.4px;color:#111;transform:scaleX(0.9767);">Réglages d'Impression</span>
<span class="t" style="left:238.0px;top:12.50px;font-size:10.4px;line-height:12.4px;color:#111;transform:scaleX(0.9872);">Filaments</span>
<span class="t" style="left:321.6px;top:12.50px;font-size:10.4px;line-height:12.4px;color:#111;transform:scaleX(1.0313);">Imprimantes</span>
<span class="t" style="left:420.0px;top:12.50px;font-size:10.4px;line-height:12.4px;color:#111;transform:scaleX(0.9947);">Printables</span>
<div class="abs" style="left:1050px;top:8px;width:263px;height:20.5px;box-sizing:border-box;border:1px solid #4a4a4a;background:#fff;"></div>
<span class="t" style="left:1057.2px;top:13.17px;font-size:10.2px;line-height:12.2px;color:#111;transform:scaleX(1.0096);">Entrer un terme de recherche</span>
<svg class="abs" style="left:1290px;top:8px" width="24" height="22" viewBox="1290 8 24 22"><circle cx="1300.3" cy="15.7" r="4.2" fill="none" stroke="#d2743c" stroke-width="1.5"/><path d="M1303.4 18.9l5 5.2" stroke="#7a7a7a" stroke-width="2.2" stroke-linecap="round"/></svg>
<svg class="abs" style="left:1450px;top:4px" width="230" height="28" viewBox="1450 4 230 28"><polygon points="1459,11.9 1464.3,14.9 1464.3,20.9 1459,23.9 1453.7,20.9 1453.7,14.9" fill="#78e02a"/><path d="M1548.5 16.3l5 3.4 5-3.4" fill="none" stroke="#444" stroke-width="1.3"/><circle cx="1588.6" cy="17.9" r="9" fill="none" stroke="#6e6e6e" stroke-width="1.1"/><circle cx="1588.6" cy="15" r="3.4" fill="none" stroke="#6e6e6e" stroke-width="1.1"/><path d="M1582.2 24.2a6.6 6 0 0 1 12.8 0" fill="none" stroke="#6e6e6e" stroke-width="1.1"/><path d="M1659.8 16.3l5 3.4 5-3.4" fill="none" stroke="#444" stroke-width="1.3"/></svg>
<span class="t" style="left:1470.9px;top:13.18px;font-size:10.3px;line-height:12.3px;color:#111;transform:scaleX(1.0375);">Mode débutant</span>
<span class="t" style="left:1603.8px;top:13.18px;font-size:10.3px;line-height:12.3px;color:#111;transform:scaleX(1.0071);">Connexion</span>
<div class="abs" style="left:1313px;top:36px;width:367px;height:829px;background:#fff;"></div>
<span class="t" style="left:1317.8px;top:37.27px;font-size:10.2px;line-height:12.2px;color:#111;">Réglages d'impression:</span>
<span class="t" style="left:1317.8px;top:74.77px;font-size:10.2px;line-height:12.2px;color:#111;transform:scaleX(1.0133);">Filament:</span>
<span class="t" style="left:1317.8px;top:112.27px;font-size:10.2px;line-height:12.2px;color:#111;transform:scaleX(1.0586);">Imprimante:</span>
<div class="combo" style="left:1317.5px;top:51.2px;width:344.5px;height:20.4px;"></div>
<div class="combo" style="left:1317.5px;top:88.7px;width:344.5px;height:20.4px;"></div>
<div class="combo" style="left:1317.5px;top:126.7px;width:344.5px;height:20.4px;"></div>
<div class="combo" style="left:1365.7px;top:153.2px;width:296.3px;height:21px;"></div>
<div class="combo" style="left:1382px;top:177.2px;width:70.4px;height:20.6px;"></div>
<div class="combo" style="left:1513.5px;top:181.2px;width:12.6px;height:12.2px;border-color:#555;"></div>
<span class="t" style="left:1366.0px;top:55.77px;font-size:10.2px;line-height:12.2px;color:#111;transform:scaleX(0.9681);">0.10mm FAST DETAIL</span>
<span class="t" style="left:1366.0px;top:93.37px;font-size:10.2px;line-height:12.2px;color:#111;transform:scaleX(0.9349);">Generic PETG</span>
<span class="t" style="left:1366.0px;top:131.07px;font-size:10.2px;line-height:12.2px;color:#111;transform:scaleX(0.9769);">Original Prusa MK4S HF0.4 nozzle</span>
<span class="t" style="left:1319.3px;top:158.27px;font-size:10.2px;line-height:12.2px;color:#111;">Supports:</span>
<span class="t" style="left:1372.8px;top:158.27px;font-size:10.2px;line-height:12.2px;color:#111;transform:scaleX(1.0061);">Seulement pour les générateurs de supports</span>
<span class="t" style="left:1319.3px;top:182.07px;font-size:10.2px;line-height:12.2px;color:#111;transform:scaleX(0.9792);">Remplissage:</span>
<span class="t" style="left:1389.6px;top:182.07px;font-size:10.2px;line-height:12.2px;color:#111;transform:scaleX(0.9553);">15%</span>
<span class="t" style="left:1470.9px;top:182.07px;font-size:10.2px;line-height:12.2px;color:#111;">Bordure:</span>
<div class="abs" style="left:1324.7px;top:92.3px;width:20.4px;height:13.2px;background:#ff8000;box-shadow:0 0 0 0.5px #9a6a3a inset;"></div>
<svg class="abs" style="left:1313px;top:36px" width="367" height="180" viewBox="1313 36 367 180"><g transform="translate(1335.0 61.2)"><circle r="4.5" fill="none" stroke="#989898" stroke-width="1.3"/><circle r="5.7" fill="none" stroke="#989898" stroke-width="1.4" stroke-dasharray="2 2.48"/><circle r="2.9" fill="none" stroke="#ee8b50" stroke-width="1.1"/></g><path d="M1351.3 61.0v-2.6a2.7 2.7 0 0 1 5.4 0v2.6" fill="none" stroke="#7d7d7d" stroke-width="1.5"/><rect x="1349.3" y="61.0" width="9.4" height="6.6" rx="0.8" fill="#7d7d7d"/><rect x="1352.5" y="63.6" width="3" height="1.8" fill="#fff"/><path d="M1351.3 98.6v-2.6a2.7 2.7 0 0 1 5.4 0v2.6" fill="none" stroke="#7d7d7d" stroke-width="1.5"/><rect x="1349.3" y="98.6" width="9.4" height="6.6" rx="0.8" fill="#7d7d7d"/><rect x="1352.5" y="101.2" width="3" height="1.8" fill="#fff"/><path d="M1351.3 136.4v-2.6a2.7 2.7 0 0 1 5.4 0v2.6" fill="none" stroke="#7d7d7d" stroke-width="1.5"/><rect x="1349.3" y="136.4" width="9.4" height="6.6" rx="0.8" fill="#7d7d7d"/><rect x="1352.5" y="139.0" width="3" height="1.8" fill="#fff"/><g transform="translate(1671.2 60.8)"><circle r="4.5" fill="none" stroke="#989898" stroke-width="1.3"/><circle r="5.7" fill="none" stroke="#989898" stroke-width="1.4" stroke-dasharray="2 2.48"/><circle r="2.9" fill="none" stroke="#ee8b50" stroke-width="1.1"/></g><g transform="translate(1671.2 98.3)"><circle r="4.5" fill="none" stroke="#989898" stroke-width="1.3"/><circle r="5.7" fill="none" stroke="#989898" stroke-width="1.4" stroke-dasharray="2 2.48"/><circle r="2.9" fill="none" stroke="#ee8b50" stroke-width="1.1"/></g><g transform="translate(1671.2 136.0)"><circle r="4.5" fill="none" stroke="#989898" stroke-width="1.3"/><circle r="5.7" fill="none" stroke="#989898" stroke-width="1.4" stroke-dasharray="2 2.48"/><circle r="2.9" fill="none" stroke="#ee8b50" stroke-width="1.1"/></g><path d="M1645.8 59.7l5 3.4 5-3.4" fill="none" stroke="#333" stroke-width="1.3"/><path d="M1645.8 97.3l5 3.4 5-3.4" fill="none" stroke="#333" stroke-width="1.3"/><path d="M1645.8 135.1l5 3.4 5-3.4" fill="none" stroke="#333" stroke-width="1.3"/><path d="M1645.8 162.1l5 3.4 5-3.4" fill="none" stroke="#333" stroke-width="1.3"/><path d="M1436.4 185.9l5 3.4 5-3.4" fill="none" stroke="#333" stroke-width="1.3"/><rect x="1329.5" y="130.2" width="11.6" height="11.6" fill="#fff" stroke="#666" stroke-width="1"/><path d="M1329.5 133.8h11.6" stroke="#666" stroke-width="0.9"/><rect x="1331" y="133" width="2.6" height="2.6" fill="#ff6a1a"/></svg>
<div class="abs" style="left:1317.5px;top:702.3px;width:370px;height:125.4px;box-sizing:border-box;border:1px solid #dcdcdc;"></div>
<div class="abs" style="left:1322.5px;top:697px;width:139px;height:12px;background:#fff;"></div>
<span class="t" style="left:1325.7px;top:697.47px;font-size:10.2px;line-height:12.2px;color:#111;font-weight:bold;">Informations de découpage</span>
<span class="t" style="left:1322.3px;top:712.47px;font-size:10.2px;line-height:12.2px;color:#111;transform:scaleX(1.0117);">Filament Utilisé (g)</span>
<span class="t" style="left:1465.7px;top:712.47px;font-size:10.2px;line-height:12.2px;color:#111;transform:scaleX(0.9012);">34,31</span>
<span class="t" style="left:1322.3px;top:731.07px;font-size:10.2px;line-height:12.2px;color:#111;transform:scaleX(1.0190);">Filament Utilisé (m)</span>
<span class="t" style="left:1465.7px;top:731.07px;font-size:10.2px;line-height:12.2px;color:#111;transform:scaleX(0.9287);">11,23</span>
<span class="t" style="left:1322.3px;top:749.67px;font-size:10.2px;line-height:12.2px;color:#111;transform:scaleX(1.0330);">Filament Utilisé (mm</span>
<span class="t" style="left:1465.7px;top:749.67px;font-size:10.2px;line-height:12.2px;color:#111;transform:scaleX(0.9286);">27015,69</span>
<span class="t" style="left:1322.3px;top:768.17px;font-size:10.2px;line-height:12.2px;color:#111;transform:scaleX(1.0444);">Coût</span>
<span class="t" style="left:1465.7px;top:768.17px;font-size:10.2px;line-height:12.2px;color:#111;transform:scaleX(0.9320);">0,95</span>
<span class="t" style="left:1418.8px;top:749.22px;font-size:6px;line-height:8px;color:#111;">3</span>
<span class="t" style="left:1422.3px;top:749.67px;font-size:10.2px;line-height:12.2px;color:#111;">)</span>
<span class="t" style="left:1322.3px;top:785.97px;font-size:10.2px;line-height:12.2px;color:#111;transform:scaleX(1.0198);">Temps d'impression estimé:</span>
<span class="t" style="left:1330.6px;top:799.07px;font-size:10.2px;line-height:12.2px;color:#111;transform:scaleX(1.0494);">- mode normal</span>
<span class="t" style="left:1465.7px;top:799.07px;font-size:10.2px;line-height:12.2px;color:#111;transform:scaleX(1.0101);">1h54m</span>
<span class="t" style="left:1330.6px;top:812.47px;font-size:10.2px;line-height:12.2px;color:#111;transform:scaleX(1.0207);">- mode silencieux</span>
<span class="t" style="left:1465.7px;top:812.47px;font-size:10.2px;line-height:12.2px;color:#111;transform:scaleX(1.0191);">2h2m</span>
<div class="abs" style="left:1317.7px;top:833.7px;width:363px;height:27.7px;background:#e4e4e4;"></div>
<span class="t" style="left:1452.3px;top:841.80px;font-size:10.4px;line-height:12.4px;color:#111;font-weight:bold;">Exporter le G-code</span>
</body></html>
